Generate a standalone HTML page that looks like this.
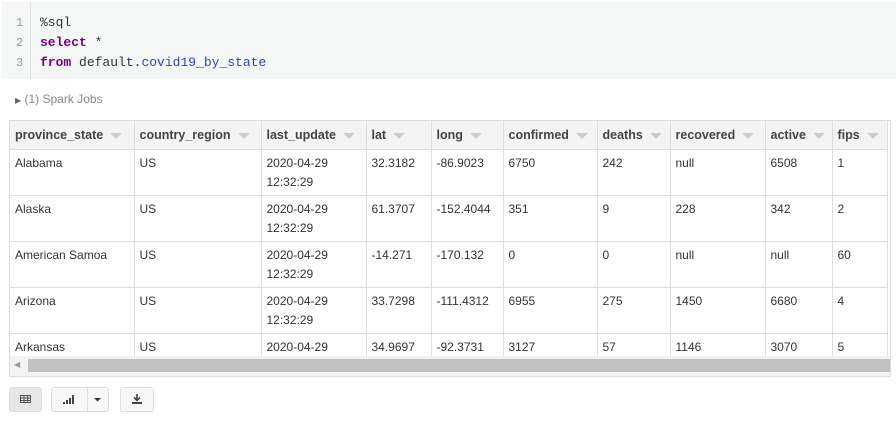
<!DOCTYPE html>
<html><head><style>
body{margin:0;width:896px;height:422px;background:#fff;font-family:"Liberation Sans",sans-serif;position:relative;overflow:hidden}
.code{position:absolute;left:2px;top:2px;width:894px;height:77px;background:#f5f6f6}
.gut{position:absolute;left:28px;top:0;width:1px;height:77px;background:#e3e3e3}
.ln{position:absolute;left:14px;font:12px "Liberation Mono",monospace;color:#999}
.cl{position:absolute;left:38px;font:13px "Liberation Mono",monospace;color:#333}
.k{color:#770088;font-weight:bold}.v{color:#3344bb}
.jobs{position:absolute;left:15px;top:92px;font-size:12px;color:#888}
.tw{position:absolute;left:9px;top:120px;width:880px;height:255px;border:1px solid #ddd;overflow:hidden}
table{border-collapse:collapse;table-layout:fixed;font-size:12px;color:#333;position:absolute;left:0;top:0;width:877px}
td,th{border-right:1px solid #ddd;border-bottom:1px solid #ddd;padding:0 0 0 5px;text-align:left;vertical-align:top;white-space:nowrap;overflow:hidden}
th{height:28px;line-height:28px;background:#f4f4f4;font-weight:bold;color:#444;font-size:12.5px;box-sizing:border-box}
th span{display:inline-block;width:0;height:0;border-left:6px solid transparent;border-right:6px solid transparent;border-top:6px solid #ccc;margin-left:7px;vertical-align:middle}
td{height:46px;line-height:19px;padding-top:4px;box-sizing:border-box}
.sb{position:absolute;left:0;top:235px;width:880px;height:20px;background:#f3f3f3}
.th{position:absolute;left:18px;top:3px;width:862px;height:13px;background:#c1c1c1}
.btn{position:absolute;top:387px;height:25px;border:1px solid #ddd;border-radius:3px;background:#f7f7f7;box-sizing:border-box}
</style></head><body>
<div class="code"><div class="gut"></div>
<div class="ln" style="top:14px">1</div><div class="ln" style="top:34px">2</div><div class="ln" style="top:54px">3</div>
<div class="cl" style="top:13px">%sql</div>
<div class="cl" style="top:33px"><span class="k">select</span> *</div>
<div class="cl" style="top:53px"><span class="k">from</span> default.<span class="v">covid19_by_state</span></div>
</div>
<div class="jobs"><span style="font-size:8px;color:#666">▶</span> (1) Spark Jobs</div>
<div class="tw">
<table>
<colgroup><col style="width:124px"><col style="width:127px"><col style="width:105px"><col style="width:65px"><col style="width:72px"><col style="width:94px"><col style="width:73px"><col style="width:95px"><col style="width:67px"><col style="width:55px"></colgroup>
<tr><th>province_state<span></span></th><th>country_region<span></span></th><th>last_update<span></span></th><th>lat<span></span></th><th>long<span></span></th><th>confirmed<span></span></th><th>deaths<span></span></th><th>recovered<span></span></th><th>active<span></span></th><th>fips<span></span></th></tr>
<tr><td>Alabama</td><td>US</td><td>2020-04-29<br>12:32:29</td><td>32.3182</td><td>-86.9023</td><td>6750</td><td>242</td><td>null</td><td>6508</td><td>1</td></tr>
<tr><td>Alaska</td><td>US</td><td>2020-04-29<br>12:32:29</td><td>61.3707</td><td>-152.4044</td><td>351</td><td>9</td><td>228</td><td>342</td><td>2</td></tr>
<tr><td>American Samoa</td><td>US</td><td>2020-04-29<br>12:32:29</td><td>-14.271</td><td>-170.132</td><td>0</td><td>0</td><td>null</td><td>null</td><td>60</td></tr>
<tr><td>Arizona</td><td>US</td><td>2020-04-29<br>12:32:29</td><td>33.7298</td><td>-111.4312</td><td>6955</td><td>275</td><td>1450</td><td>6680</td><td>4</td></tr>
<tr><td>Arkansas</td><td>US</td><td>2020-04-29<br>12:32:29</td><td>34.9697</td><td>-92.3731</td><td>3127</td><td>57</td><td>1146</td><td>3070</td><td>5</td></tr>
</table>
<div class="sb"><span style="position:absolute;left:4px;top:4px;font-size:8px;color:#999">◀</span><div class="th"></div></div>
</div>
<div class="btn" style="left:9px;width:33px;background:#e8e8e8">
<svg width="31" height="23" viewBox="0 0 31 23"><g fill="none" stroke="#555" stroke-width="1"><rect x="10.5" y="7.5" width="10" height="7"/><line x1="10.5" y1="10" x2="20.5" y2="10"/><line x1="10.5" y1="12.5" x2="20.5" y2="12.5"/><line x1="14" y1="7.5" x2="14" y2="14.5"/><line x1="17.5" y1="7.5" x2="17.5" y2="14.5"/></g></svg></div>
<div class="btn" style="left:51px;width:58px">
<svg width="56" height="23" viewBox="0 0 56 23"><g fill="#444"><rect x="11" y="14" width="2" height="2"/><rect x="14" y="12" width="2" height="4"/><rect x="17" y="10" width="2" height="6"/><rect x="20" y="7" width="2" height="9"/></g><line x1="35.5" y1="0" x2="35.5" y2="23" stroke="#ddd"/><path d="M42 10h7l-3.5 3.5z" fill="#333"/></svg></div>
<div class="btn" style="left:120px;width:34px">
<svg width="32" height="23" viewBox="0 0 32 23"><path d="M16 6v6M13 9.5l3 3 3-3" stroke="#444" stroke-width="1.6" fill="none"/><rect x="11" y="14" width="10" height="2" fill="#444"/></svg></div>
</body></html>
